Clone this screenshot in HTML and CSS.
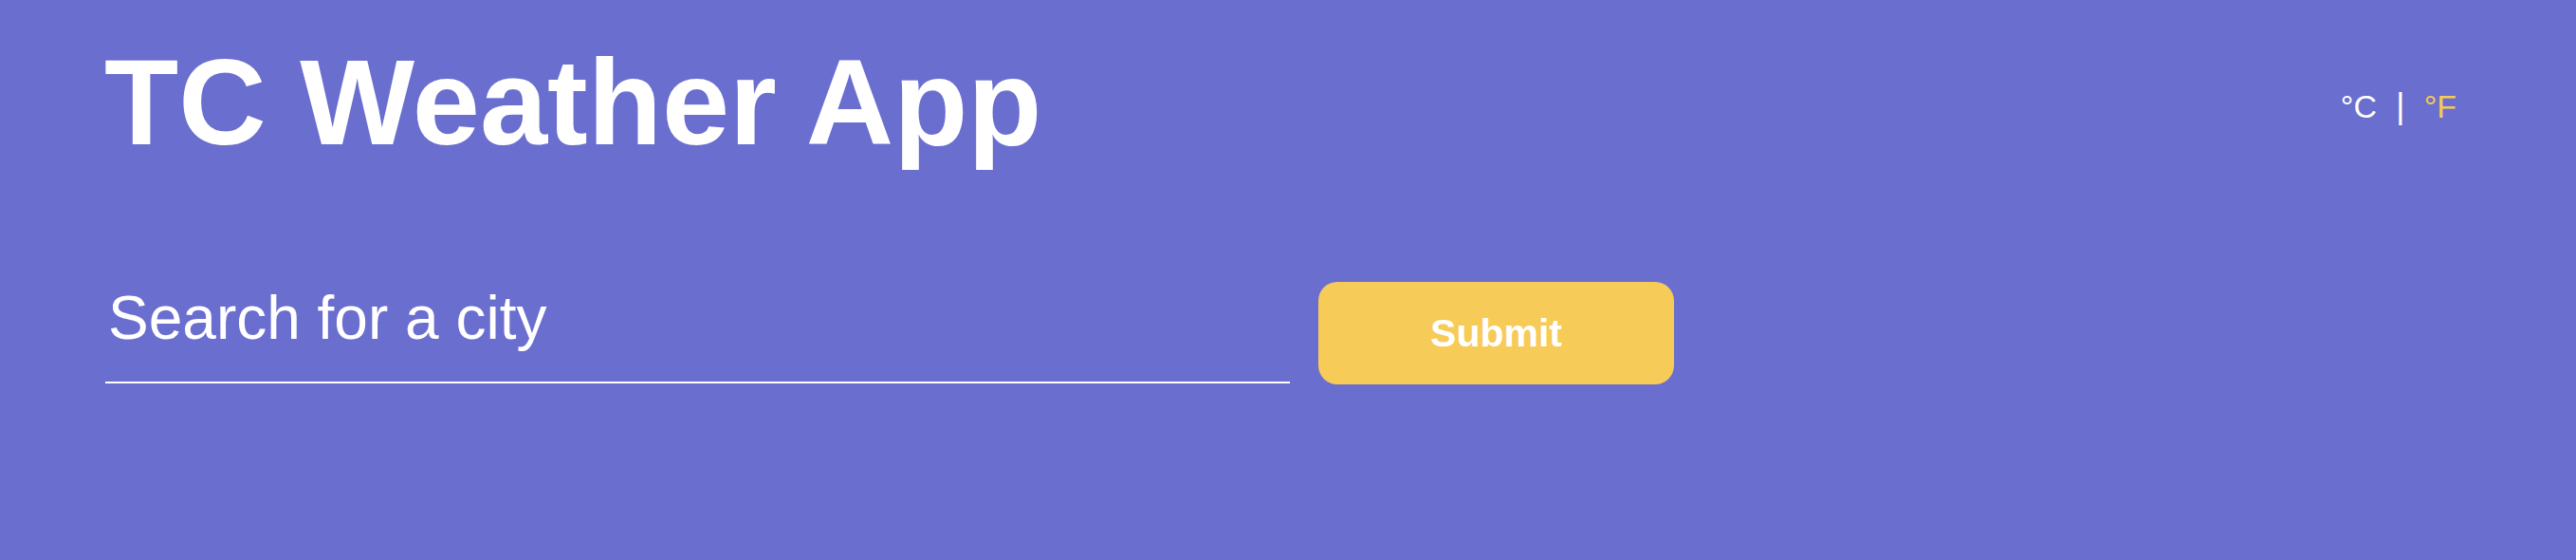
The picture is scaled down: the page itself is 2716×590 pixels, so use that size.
FILE: index.html
```html
<!DOCTYPE html>
<html lang="en">
<head>
<meta charset="utf-8">
<title>TC Weather App</title>
<link rel="stylesheet" href="styles.css">
</head>
<body>
<div class="app">
  <header class="header">
    <h1 class="title">TC Weather App</h1>
    <div class="units">
      <span class="unit unit-active">°C</span>
      <span class="sep">|</span>
      <span class="unit unit-alt">°F</span>
    </div>
  </header>
  <form class="search">
    <input class="search-input" type="text" placeholder="Search for a city">
    <button class="search-btn" type="button">Submit</button>
  </form>
</div>
</body>
</html>
```
FILE: styles.css
```css
html {
  background: #6a6ecf;
}
body {
  margin: 0;
  min-height: 590px;
  background: #6a6ecf;
  font-family: "Liberation Sans", Arial, sans-serif;
  color: #fff;
}
.app {
  padding: 34px 126px 0 110px;
}
.header {
  display: flex;
  justify-content: space-between;
  align-items: flex-start;
}
.title {
  margin: 0;
  font-size: 128px;
  font-weight: 700;
  line-height: normal;
}
.units {
  display: flex;
  align-items: center;
  gap: 20px;
  margin-top: 57px;
  font-size: 34px;
  line-height: normal;
}
.sep {
  font-size: 37px;
}
.unit-alt {
  color: #f7c955;
}
.search {
  display: flex;
  align-items: flex-start;
  gap: 30px;
  margin-top: 116px;
}
.search-input {
  width: 1249px;
  box-sizing: border-box;
  margin: 0 0 0 1px;
  padding: 1px 0 30px 3px;
  border: none;
  border-bottom: 2px solid #fff;
  background: transparent;
  font-family: "Liberation Sans", Arial, sans-serif;
  font-size: 64px;
  line-height: 74px;
  color: #fff;
  outline: none;
}
.search-input::placeholder {
  color: #fff;
  opacity: 1;
}
.search-btn {
  width: 375px;
  height: 108px;
  border: none;
  border-radius: 20px;
  background: #f7cb58;
  color: #fff;
  font-family: "Liberation Sans", Arial, sans-serif;
  font-size: 41px;
  font-weight: 700;
  cursor: pointer;
}
```
